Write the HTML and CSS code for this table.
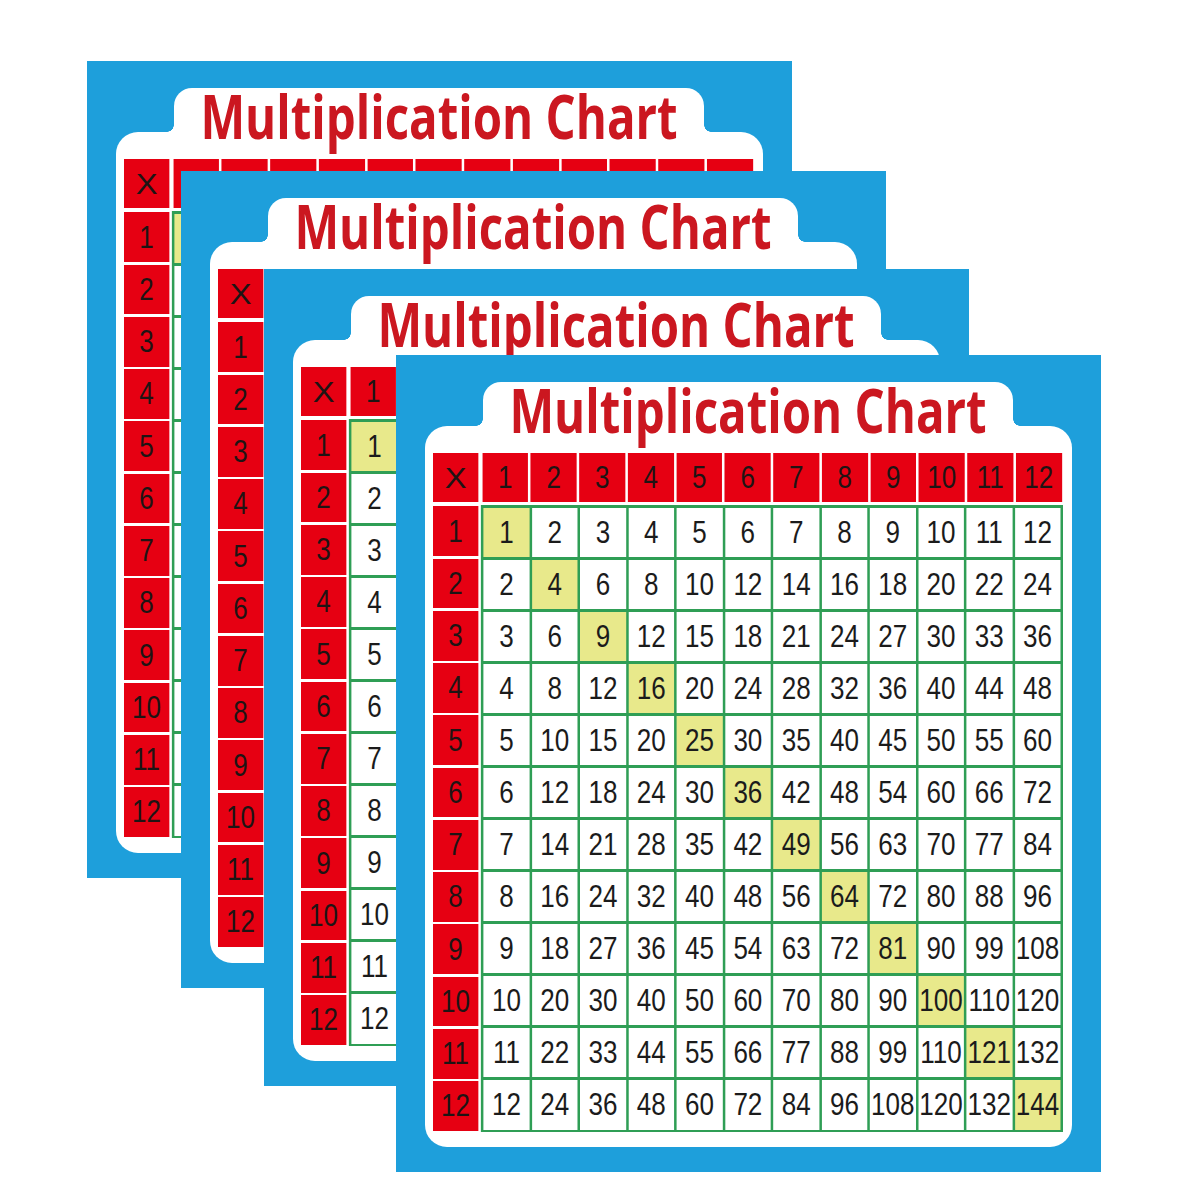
FILE: index.html
```html
<!DOCTYPE html>
<html lang="en">
<head>
<meta charset="utf-8">
<title>Multiplication Chart</title>
<link rel="stylesheet" href="styles.css">
</head>
<body>
<main class="stage">
  <!-- Back sheets: only the parts that stay uncovered carry their labels -->
  <section class="card c1">
    <div class="tab"><h1 class="title">Multiplication Chart</h1></div>
    <div class="sheet">
      <div class="table">
        <div class="corner"><span class="x">X</span></div>
        <div class="col-heads"><span></span><span></span><span></span><span></span><span></span><span></span><span></span><span></span><span></span><span></span><span></span><span></span></div>
        <div class="row-heads"><span>1</span><span>2</span><span>3</span><span>4</span><span>5</span><span>6</span><span>7</span><span>8</span><span>9</span><span>10</span><span>11</span><span>12</span></div>
        <div class="cells">
          <span class="d"></span><span></span><span></span><span></span><span></span><span></span><span></span><span></span><span></span><span></span><span></span><span></span>
          <span></span><span class="d"></span><span></span><span></span><span></span><span></span><span></span><span></span><span></span><span></span><span></span><span></span>
          <span></span><span></span><span class="d"></span><span></span><span></span><span></span><span></span><span></span><span></span><span></span><span></span><span></span>
          <span></span><span></span><span></span><span class="d"></span><span></span><span></span><span></span><span></span><span></span><span></span><span></span><span></span>
          <span></span><span></span><span></span><span></span><span class="d"></span><span></span><span></span><span></span><span></span><span></span><span></span><span></span>
          <span></span><span></span><span></span><span></span><span></span><span class="d"></span><span></span><span></span><span></span><span></span><span></span><span></span>
          <span></span><span></span><span></span><span></span><span></span><span></span><span class="d"></span><span></span><span></span><span></span><span></span><span></span>
          <span></span><span></span><span></span><span></span><span></span><span></span><span></span><span class="d"></span><span></span><span></span><span></span><span></span>
          <span></span><span></span><span></span><span></span><span></span><span></span><span></span><span></span><span class="d"></span><span></span><span></span><span></span>
          <span></span><span></span><span></span><span></span><span></span><span></span><span></span><span></span><span></span><span class="d"></span><span></span><span></span>
          <span></span><span></span><span></span><span></span><span></span><span></span><span></span><span></span><span></span><span></span><span class="d"></span><span></span>
          <span></span><span></span><span></span><span></span><span></span><span></span><span></span><span></span><span></span><span></span><span></span><span class="d"></span>
        </div>
      </div>
    </div>
  </section>

  <section class="card c2">
    <div class="tab"><h1 class="title">Multiplication Chart</h1></div>
    <div class="sheet">
      <div class="table">
        <div class="corner"><span class="x">X</span></div>
        <div class="col-heads"><span></span><span></span><span></span><span></span><span></span><span></span><span></span><span></span><span></span><span></span><span></span><span></span></div>
        <div class="row-heads"><span>1</span><span>2</span><span>3</span><span>4</span><span>5</span><span>6</span><span>7</span><span>8</span><span>9</span><span>10</span><span>11</span><span>12</span></div>
        <div class="cells">
          <span class="d"></span><span></span><span></span><span></span><span></span><span></span><span></span><span></span><span></span><span></span><span></span><span></span>
          <span></span><span class="d"></span><span></span><span></span><span></span><span></span><span></span><span></span><span></span><span></span><span></span><span></span>
          <span></span><span></span><span class="d"></span><span></span><span></span><span></span><span></span><span></span><span></span><span></span><span></span><span></span>
          <span></span><span></span><span></span><span class="d"></span><span></span><span></span><span></span><span></span><span></span><span></span><span></span><span></span>
          <span></span><span></span><span></span><span></span><span class="d"></span><span></span><span></span><span></span><span></span><span></span><span></span><span></span>
          <span></span><span></span><span></span><span></span><span></span><span class="d"></span><span></span><span></span><span></span><span></span><span></span><span></span>
          <span></span><span></span><span></span><span></span><span></span><span></span><span class="d"></span><span></span><span></span><span></span><span></span><span></span>
          <span></span><span></span><span></span><span></span><span></span><span></span><span></span><span class="d"></span><span></span><span></span><span></span><span></span>
          <span></span><span></span><span></span><span></span><span></span><span></span><span></span><span></span><span class="d"></span><span></span><span></span><span></span>
          <span></span><span></span><span></span><span></span><span></span><span></span><span></span><span></span><span></span><span class="d"></span><span></span><span></span>
          <span></span><span></span><span></span><span></span><span></span><span></span><span></span><span></span><span></span><span></span><span class="d"></span><span></span>
          <span></span><span></span><span></span><span></span><span></span><span></span><span></span><span></span><span></span><span></span><span></span><span class="d"></span>
        </div>
      </div>
    </div>
  </section>

  <section class="card c3">
    <div class="tab"><h1 class="title">Multiplication Chart</h1></div>
    <div class="sheet">
      <div class="table">
        <div class="corner"><span class="x">X</span></div>
        <div class="col-heads"><span>1</span><span></span><span></span><span></span><span></span><span></span><span></span><span></span><span></span><span></span><span></span><span></span></div>
        <div class="row-heads"><span>1</span><span>2</span><span>3</span><span>4</span><span>5</span><span>6</span><span>7</span><span>8</span><span>9</span><span>10</span><span>11</span><span>12</span></div>
        <div class="cells">
          <span class="d">1</span><span></span><span></span><span></span><span></span><span></span><span></span><span></span><span></span><span></span><span></span><span></span>
          <span>2</span><span class="d"></span><span></span><span></span><span></span><span></span><span></span><span></span><span></span><span></span><span></span><span></span>
          <span>3</span><span></span><span class="d"></span><span></span><span></span><span></span><span></span><span></span><span></span><span></span><span></span><span></span>
          <span>4</span><span></span><span></span><span class="d"></span><span></span><span></span><span></span><span></span><span></span><span></span><span></span><span></span>
          <span>5</span><span></span><span></span><span></span><span class="d"></span><span></span><span></span><span></span><span></span><span></span><span></span><span></span>
          <span>6</span><span></span><span></span><span></span><span></span><span class="d"></span><span></span><span></span><span></span><span></span><span></span><span></span>
          <span>7</span><span></span><span></span><span></span><span></span><span></span><span class="d"></span><span></span><span></span><span></span><span></span><span></span>
          <span>8</span><span></span><span></span><span></span><span></span><span></span><span></span><span class="d"></span><span></span><span></span><span></span><span></span>
          <span>9</span><span></span><span></span><span></span><span></span><span></span><span></span><span></span><span class="d"></span><span></span><span></span><span></span>
          <span>10</span><span></span><span></span><span></span><span></span><span></span><span></span><span></span><span></span><span class="d"></span><span></span><span></span>
          <span>11</span><span></span><span></span><span></span><span></span><span></span><span></span><span></span><span></span><span></span><span class="d"></span><span></span>
          <span>12</span><span></span><span></span><span></span><span></span><span></span><span></span><span></span><span></span><span></span><span></span><span class="d"></span>
        </div>
      </div>
    </div>
  </section>

  <section class="card c4">
    <div class="tab"><h1 class="title">Multiplication Chart</h1></div>
    <div class="sheet">
      <div class="table">
        <div class="corner"><span class="x">X</span></div>
        <div class="col-heads"><span>1</span><span>2</span><span>3</span><span>4</span><span>5</span><span>6</span><span>7</span><span>8</span><span>9</span><span>10</span><span>11</span><span>12</span></div>
        <div class="row-heads"><span>1</span><span>2</span><span>3</span><span>4</span><span>5</span><span>6</span><span>7</span><span>8</span><span>9</span><span>10</span><span>11</span><span>12</span></div>
        <div class="cells">
          <span class="d">1</span><span>2</span><span>3</span><span>4</span><span>5</span><span>6</span><span>7</span><span>8</span><span>9</span><span>10</span><span>11</span><span>12</span>
          <span>2</span><span class="d">4</span><span>6</span><span>8</span><span>10</span><span>12</span><span>14</span><span>16</span><span>18</span><span>20</span><span>22</span><span>24</span>
          <span>3</span><span>6</span><span class="d">9</span><span>12</span><span>15</span><span>18</span><span>21</span><span>24</span><span>27</span><span>30</span><span>33</span><span>36</span>
          <span>4</span><span>8</span><span>12</span><span class="d">16</span><span>20</span><span>24</span><span>28</span><span>32</span><span>36</span><span>40</span><span>44</span><span>48</span>
          <span>5</span><span>10</span><span>15</span><span>20</span><span class="d">25</span><span>30</span><span>35</span><span>40</span><span>45</span><span>50</span><span>55</span><span>60</span>
          <span>6</span><span>12</span><span>18</span><span>24</span><span>30</span><span class="d">36</span><span>42</span><span>48</span><span>54</span><span>60</span><span>66</span><span>72</span>
          <span>7</span><span>14</span><span>21</span><span>28</span><span>35</span><span>42</span><span class="d">49</span><span>56</span><span>63</span><span>70</span><span>77</span><span>84</span>
          <span>8</span><span>16</span><span>24</span><span>32</span><span>40</span><span>48</span><span>56</span><span class="d">64</span><span>72</span><span>80</span><span>88</span><span>96</span>
          <span>9</span><span>18</span><span>27</span><span>36</span><span>45</span><span>54</span><span>63</span><span>72</span><span class="d">81</span><span>90</span><span>99</span><span>108</span>
          <span>10</span><span>20</span><span>30</span><span>40</span><span>50</span><span>60</span><span>70</span><span>80</span><span>90</span><span class="d">100</span><span>110</span><span>120</span>
          <span>11</span><span>22</span><span>33</span><span>44</span><span>55</span><span>66</span><span>77</span><span>88</span><span>99</span><span>110</span><span class="d">121</span><span>132</span>
          <span>12</span><span>24</span><span>36</span><span>48</span><span>60</span><span>72</span><span>84</span><span>96</span><span>108</span><span>120</span><span>132</span><span class="d">144</span>
        </div>
      </div>
    </div>
  </section>
</main>
</body>
</html>
```

FILE: styles.css
```css
* {
  box-sizing: border-box;
  margin: 0;
  padding: 0;
}

html, body {
  background: #ffffff;
}

body {
  margin: 0;
  width: 1200px;
  height: 1200px;
  overflow: hidden;
  font-family: "Liberation Sans", Arial, sans-serif;
}

.stage {
  position: relative;
  width: 1200px;
  height: 1200px;
}

/* Each chart is a free-floating sheet stacked on the canvas */
.card {
  position: absolute;
  width: 705px;
  height: 817px;
  background: #1e9fdb;
  padding: 27px 29px 25px 29px;
  display: flex;
  flex-direction: column;
}

.c1 { left: 87px;  top: 61px; }
.c2 { left: 181px; top: 171px; }
.c3 { left: 264px; top: 269px; }
.c4 { left: 396px; top: 355px; }

.tab {
  position: relative;
  align-self: flex-start;
  margin-left: 58px;
  width: 530px;
  height: 44px;
  background: #ffffff;
  border-radius: 18px 18px 0 0;
  display: flex;
  justify-content: center;
}

.tab::before,
.tab::after {
  content: "";
  position: absolute;
  bottom: 0;
  width: 7px;
  height: 7px;
}

.tab::before {
  left: -7px;
  background: radial-gradient(circle at 0 0, transparent 6.5px, #ffffff 7px);
}

.tab::after {
  right: -7px;
  background: radial-gradient(circle at 100% 0, transparent 6.5px, #ffffff 7px);
}

.title {
  font-family: "Open Sans", "Noto Sans", sans-serif;
  font-weight: 700;
  font-size: 60px;
  line-height: 44px;
  margin-top: 6px;
  color: #cb1720;
  white-space: nowrap;
  transform: scaleX(0.79);
}

.sheet {
  flex: 1;
  background: #ffffff;
  border-radius: 22px;
  padding: 27px 9px 15px 8px;
}

/* The table is laid out 1/0.84 wider and squeezed horizontally,
   which gives the narrow printed digits of the chart. */
.table {
  width: 750px;
  height: 100%;
  transform: scaleX(0.84);
  transform-origin: 0 0;
  display: grid;
  grid-template-columns: 53.6px minmax(0, 1fr);
  grid-template-rows: 49px minmax(0, 1fr);
  column-gap: 3.6px;
  row-gap: 3px;
  font-family: "Liberation Sans", Arial, sans-serif;
  font-size: 31px;
  line-height: 1;
  color: #1b1b1b;
}

.corner,
.col-heads span,
.row-heads span {
  background: #e60012;
  display: flex;
  align-items: center;
  justify-content: center;
  color: #1e1414;
}

.corner .x {
  display: inline-block;
  font-size: 30px;
  transform: scaleX(1.3);
}

.col-heads {
  display: grid;
  grid-template-columns: repeat(12, minmax(0, 1fr));
  column-gap: 3px;
  padding: 0 1.5px;
}

.row-heads {
  display: grid;
  grid-template-rows: repeat(12, minmax(0, 1fr));
  row-gap: 2.5px;
  padding: 1.25px 0;
}

.cells {
  display: grid;
  grid-template-columns: repeat(12, minmax(0, 1fr));
  grid-template-rows: repeat(12, minmax(0, 1fr));
  column-gap: 3px;
  row-gap: 2.5px;
  padding: 2.5px 3px;
  background: #2f9e55;
}

.cells span {
  background: #ffffff;
  display: flex;
  align-items: center;
  justify-content: center;
  white-space: nowrap;
}

.cells .d {
  background: #e8e98b;
}
```
